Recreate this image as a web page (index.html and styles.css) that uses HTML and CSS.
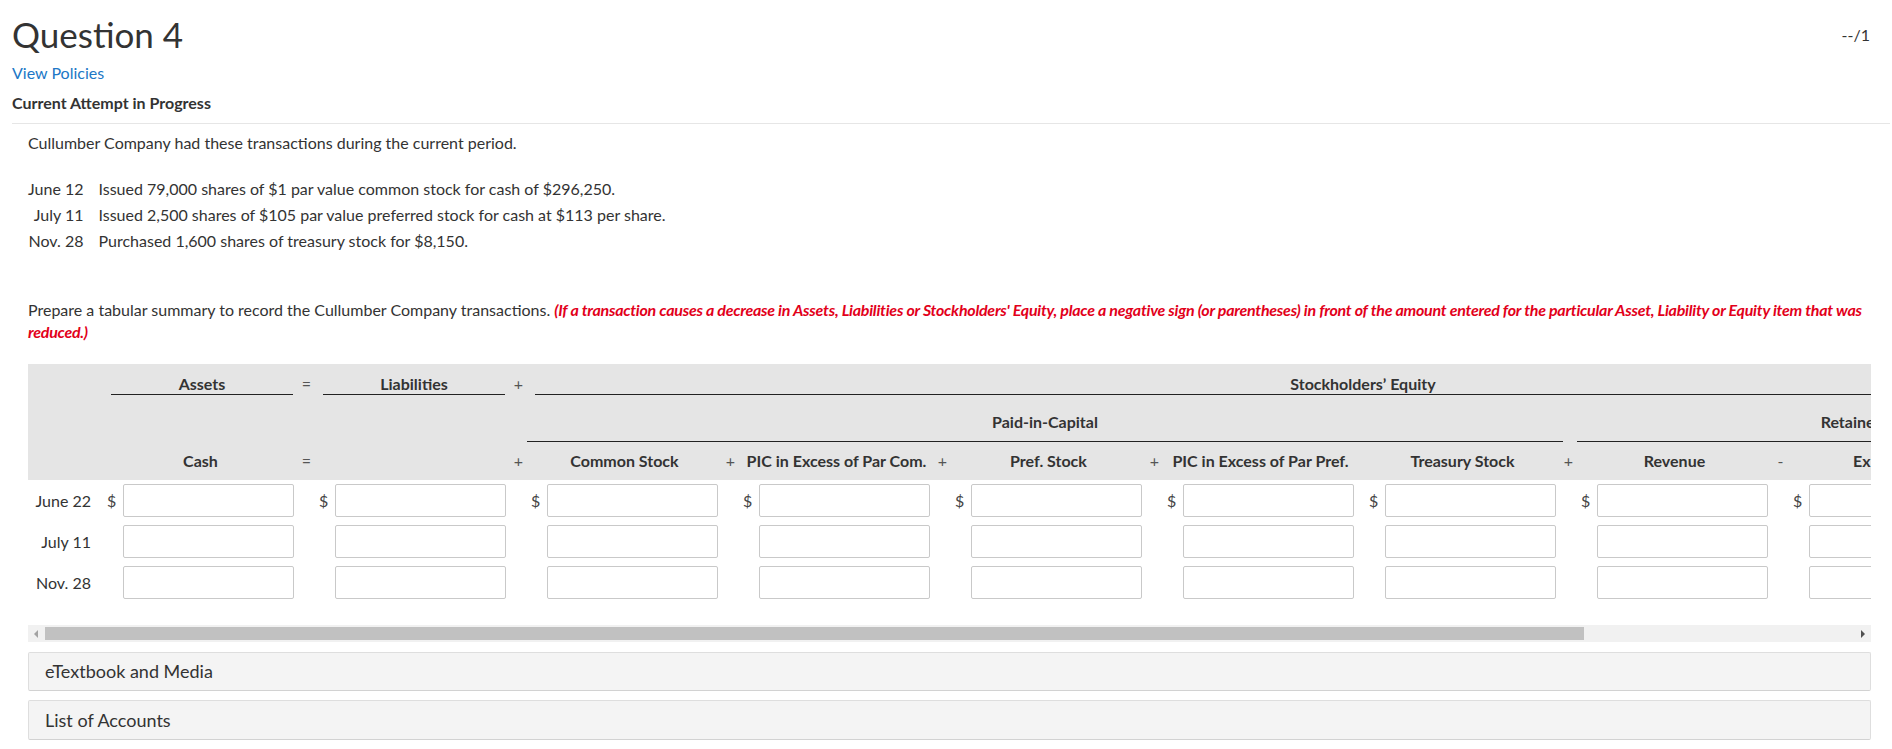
FILE: index.html
```html
<!DOCTYPE html>
<html lang="en">
<head>
<meta charset="utf-8">
<title>Question 4</title>
<link rel="stylesheet" href="styles.css">
</head>
<body>
<main class="page">
  <header class="q-head">
    <h1 class="q-title">Question 4</h1>
    <span class="q-score">--/1</span>
  </header>
  <a class="policies" href="#">View Policies</a>
  <div class="attempt">Current Attempt in Progress</div>

  <section class="q-body">
    <p class="intro">Cullumber Company had these transactions during the current period.</p>

    <table class="tx">
      <tr><td class="tx-date">June 12</td><td class="tx-desc">Issued 79,000 shares of $1 par value common stock for cash of $296,250.</td></tr>
      <tr><td class="tx-date">July 11</td><td class="tx-desc">Issued 2,500 shares of $105 par value preferred stock for cash at $113 per share.</td></tr>
      <tr><td class="tx-date">Nov. 28</td><td class="tx-desc">Purchased 1,600 shares of treasury stock for $8,150.</td></tr>
    </table>

    <p class="prompt">Prepare a tabular summary to record the Cullumber Company transactions. <em class="warn">(If a transaction causes a decrease in Assets, Liabilities or Stockholders' Equity, place a negative sign (or parentheses) in front of the amount entered for the particular Asset, Liability or Equity item that was reduced.)</em></p>

    <div class="sheet-view">
      <div class="sheet">
        <div class="sheet-head grid">
          <!-- row 1 -->
          <div class="lab r1 u1 c-cash">Assets</div>
          <div class="op r1 o-liab">=</div>
          <div class="lab r1 u1 c-liab">Liabilities</div>
          <div class="op r1 o-com">+</div>
          <div class="lab r1 u1 c-se">Stockholders’ Equity</div>
          <!-- row 2 -->
          <div class="lab r2 u2 c-pic">Paid-in-Capital</div>
          <div class="lab r2 u2 c-re">Retained Earnings</div>
          <!-- row 3 -->
          <div class="lab r3 c-cash">Cash</div>
          <div class="op r3 o-liab">=</div>
          <div class="op r3 o-com">+</div>
          <div class="lab r3 c-com">Common Stock</div>
          <div class="op r3 o-pcom">+</div>
          <div class="lab r3 c-pcom">PIC in Excess of Par Com.</div>
          <div class="op r3 o-pref">+</div>
          <div class="lab r3 c-pref">Pref. Stock</div>
          <div class="op r3 o-ppref">+</div>
          <div class="lab r3 c-ppref">PIC in Excess of Par Pref.</div>
          <div class="lab r3 c-trs">Treasury Stock</div>
          <div class="op r3 o-rev">+</div>
          <div class="lab r3 c-rev">Revenue</div>
          <div class="op r3 o-exp">-</div>
          <div class="lab r3 c-exp">Expenses</div>
          <div class="op r3 o-div">-</div>
          <div class="lab r3 c-div">Dividends</div>
        </div>

        <div class="sheet-rows grid">
          <div class="date">June 22</div>
          <span class="cur d-cash">$</span><input class="amt" type="text">
          <span class="cur d-liab">$</span><input class="amt i-liab" type="text">
          <span class="cur d-com">$</span><input class="amt i-com" type="text">
          <span class="cur d-pcom">$</span><input class="amt i-pcom" type="text">
          <span class="cur d-pref">$</span><input class="amt i-pref" type="text">
          <span class="cur d-ppref">$</span><input class="amt i-ppref" type="text">
          <span class="cur d-trs">$</span><input class="amt i-trs" type="text">
          <span class="cur d-rev">$</span><input class="amt i-rev" type="text">
          <span class="cur d-exp">$</span><input class="amt i-exp" type="text">
          <span class="cur d-div">$</span><input class="amt i-div" type="text">

          <div class="date">July 11</div>
          <input class="amt i-cash" type="text">
          <input class="amt i-liab" type="text">
          <input class="amt i-com" type="text">
          <input class="amt i-pcom" type="text">
          <input class="amt i-pref" type="text">
          <input class="amt i-ppref" type="text">
          <input class="amt i-trs" type="text">
          <input class="amt i-rev" type="text">
          <input class="amt i-exp" type="text">
          <input class="amt i-div" type="text">

          <div class="date">Nov. 28</div>
          <input class="amt i-cash" type="text">
          <input class="amt i-liab" type="text">
          <input class="amt i-com" type="text">
          <input class="amt i-pcom" type="text">
          <input class="amt i-pref" type="text">
          <input class="amt i-ppref" type="text">
          <input class="amt i-trs" type="text">
          <input class="amt i-rev" type="text">
          <input class="amt i-exp" type="text">
          <input class="amt i-div" type="text">
        </div>
      </div>
    </div>

    <div class="hscroll">
      <span class="arrow arrow-left"></span>
      <span class="thumb"></span>
      <span class="track-rest"></span>
      <span class="arrow arrow-right"></span>
    </div>

    <div class="panel">eTextbook and Media</div>
    <div class="panel panel-2">List of Accounts</div>
  </section>
</main>
</body>
</html>
```

FILE: styles.css
```css
* { box-sizing: border-box; }

body {
  margin: 0;
  background: #fff;
  color: #333;
  font-family: "Lato", "Liberation Sans", sans-serif;
  font-size: 16px;
}

.page {
  padding: 0 2px 0 12px;
}

.q-head {
  display: flex;
  align-items: center;
  justify-content: space-between;
  padding-top: 13px;
  padding-right: 20px;
}

.q-title {
  margin: 0;
  font-size: 35px;
  font-weight: 400;
  line-height: 42px;
  color: #333;
}

.q-score {
  font-size: 16px;
  line-height: 19px;
  color: #333;
}

.policies {
  display: block;
  margin-top: 8px;
  line-height: 19px;
  color: #2077c6;
  text-decoration: none;
}

.attempt {
  margin-top: 11px;
  padding-bottom: 11px;
  line-height: 19px;
  font-weight: 700;
  border-bottom: 1px solid #e6e6e6;
}

.q-body {
  padding: 0 19px 0 16px;
}

.intro {
  margin: 9px 0 0;
  line-height: 19px;
}

.tx {
  margin-top: 24px;
  border-collapse: collapse;
}

.tx td {
  padding: 0;
  height: 26px;
  line-height: 26px;
  white-space: nowrap;
}

.tx .tx-date {
  width: 57px;
  padding-right: 15px;
  text-align: right;
}

.prompt {
  margin: 45px 0 0;
  line-height: 21.6px;
}

.warn {
  color: #e2001a;
  font-weight: 700;
  font-style: italic;
  letter-spacing: -0.25px;
}

/* ---------- worksheet ---------- */

.sheet-view {
  margin-top: 22px;
  overflow: hidden;
  padding-bottom: 26px;
}

.sheet {
  width: 2176px;
}

.grid {
  display: grid;
  grid-template-columns:
    79px
    16px 171px
    25px 16px 171px
    25px 16px 171px
    25px 16px 171px
    25px 16px 171px
    25px 16px 171px
    15px 16px 171px
    25px 16px 171px
    25px 16px 171px
    25px 16px 171px
    12px;
}

.sheet-head {
  background: #e5e5e5;
  grid-template-rows: 31px 47px 38px;
}

.lab {
  font-weight: 700;
  line-height: 19px;
  text-align: center;
  white-space: nowrap;
  color: #333;
}

.op {
  line-height: 19px;
  text-align: center;
  color: #555;
}

.r1 { grid-row: 1; padding-top: 10px; }
.r2 { grid-row: 2; padding-top: 17px; }
.r3 { grid-row: 3; padding-top: 9px; }

.u1 {
  height: 31px;
  margin: 0 1px 0 4px;
  border-bottom: 1px solid #222;
}

.u2 {
  height: 47px;
  border-bottom: 1px solid #222;
}

.c-cash  { grid-column: 2 / 4; }
.c-liab  { grid-column: 5 / 7; }
.c-se    { grid-column: 8 / 31; }
.c-pic   { grid-column: 8 / 22; margin: 0 -7px 0 -4px; }
.c-re    { grid-column: 23 / 31; margin-left: -4px; }
.c-com   { grid-column: 8 / 10; }
.c-pcom  { grid-column: 11 / 13; }
.c-pref  { grid-column: 14 / 16; }
.c-ppref { grid-column: 17 / 19; }
.c-trs   { grid-column: 20 / 22; }
.c-rev   { grid-column: 23 / 25; }
.c-exp   { grid-column: 26 / 28; }
.c-div   { grid-column: 29 / 31; }

.o-liab  { grid-column: 4; }
.o-com   { grid-column: 7; }
.o-pcom  { grid-column: 10; }
.o-pref  { grid-column: 13; }
.o-ppref { grid-column: 16; }
.o-rev   { grid-column: 22; }
.o-exp   { grid-column: 25; }
.o-div   { grid-column: 28; }

.sheet-rows {
  padding-top: 4px;
  row-gap: 8px;
  grid-auto-rows: 33px;
}

.date {
  grid-column: 1;
  padding-right: 16px;
  line-height: 33px;
  text-align: right;
  white-space: nowrap;
}

.cur {
  line-height: 33px;
  text-align: right;
  padding-right: 8px;
  color: #444;
  white-space: nowrap;
}

.d-cash  { grid-column: 2; }
.d-liab  { grid-column: 5; }
.d-com   { grid-column: 8; }
.d-pcom  { grid-column: 11; }
.d-pref  { grid-column: 14; }
.d-ppref { grid-column: 17; }
.d-trs   { grid-column: 20; }
.d-rev   { grid-column: 23; }
.d-exp   { grid-column: 26; }
.d-div   { grid-column: 29; }

.amt {
  width: 171px;
  height: 33px;
  margin: 0;
  padding: 0 6px;
  border: 1px solid #c9c9c9;
  border-radius: 2px;
  background: #fff;
  font: inherit;
}

.i-cash  { grid-column: 3; }
.i-liab  { grid-column: 6; }
.i-com   { grid-column: 9; }
.i-pcom  { grid-column: 12; }
.i-pref  { grid-column: 15; }
.i-ppref { grid-column: 18; }
.i-trs   { grid-column: 21; }
.i-rev   { grid-column: 24; }
.i-exp   { grid-column: 27; }
.i-div   { grid-column: 30; }

/* ---------- horizontal scrollbar ---------- */

.hscroll {
  display: flex;
  align-items: center;
  height: 17px;
  background: #f1f1f1;
}

.arrow {
  position: relative;
  flex: 0 0 17px;
  height: 17px;
}

.arrow::before {
  content: "";
  position: absolute;
  top: 5px;
  border-top: 4px solid transparent;
  border-bottom: 4px solid transparent;
}

.arrow-left::before {
  left: 6px;
  border-right: 4px solid #a3a3a3;
}

.arrow-right::before {
  left: 7px;
  border-left: 4px solid #505050;
}

.thumb {
  flex: 0 0 1539px;
  height: 13px;
  background: #c1c1c1;
}

.track-rest {
  flex: 1;
}

/* ---------- panels ---------- */

.panel {
  margin-top: 10px;
  height: 39px;
  padding: 0 16px;
  line-height: 37px;
  font-size: 18px;
  background: #f4f4f4;
  border: 1px solid #dedede;
  border-bottom-color: #d2d2d2;
  border-radius: 2px;
  color: #333;
}

.panel-2 {
  margin-top: 9px;
  height: 40px;
  line-height: 38px;
}
```
